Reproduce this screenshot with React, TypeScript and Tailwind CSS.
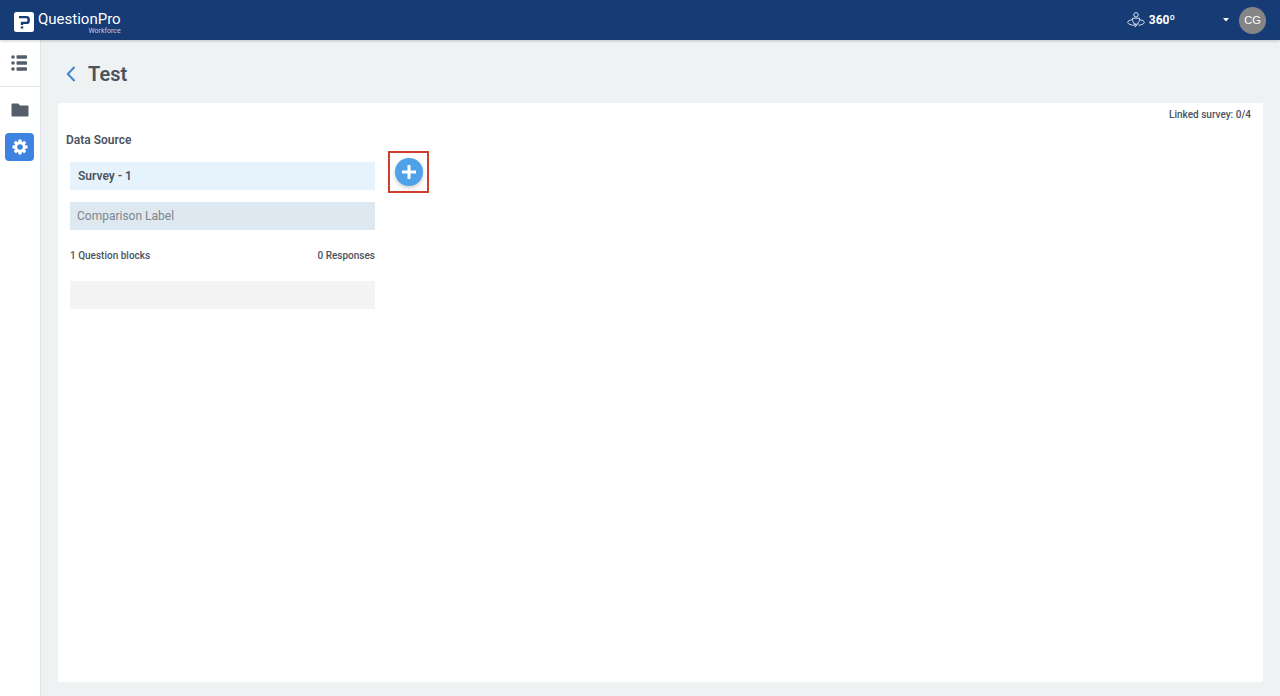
import type { ReactNode } from 'react';

interface SidebarButtonProps {
  label: string;
  active?: boolean;
  children: ReactNode;
}

function SidebarButton({ label, active = false, children }: SidebarButtonProps) {
  return (
    <button
      type="button"
      aria-label={label}
      className={
        active
          ? 'flex h-7 w-[29px] items-center justify-center rounded bg-[#3d83df] text-white'
          : 'flex h-7 w-[29px] items-center justify-center rounded text-[#545e6b]'
      }
    >
      {children}
    </button>
  );
}

function ListIcon() {
  return (
    <svg width="16" height="16" viewBox="0 0 16 16" fill="currentColor" aria-hidden="true">
      <circle cx="2" cy="2" r="1.8" />
      <circle cx="2" cy="8" r="1.8" />
      <circle cx="2" cy="14" r="1.8" />
      <rect x="5.5" y="0.2" width="10.5" height="3.6" rx="0.8" />
      <rect x="5.5" y="6.2" width="10.5" height="3.6" rx="0.8" />
      <rect x="5.5" y="12.2" width="10.5" height="3.6" rx="0.8" />
    </svg>
  );
}

function FolderIcon() {
  return (
    <svg width="18" height="14" viewBox="0 0 18 14" fill="currentColor" aria-hidden="true">
      <path d="M1.2 0.5h6L9 2.5h7.8c.5 0 .7.3.7.7v9.6c0 .4-.3.7-.7.7H1.2c-.4 0-.7-.3-.7-.7V1.2c0-.4.3-.7.7-.7z" />
    </svg>
  );
}

function GearIcon() {
  return (
    <svg width="16" height="16" viewBox="0 0 16 16" aria-hidden="true">
      <g fill="currentColor">
        <rect x="6.3" y="0.5" width="3.4" height="15" rx="1" />
        <rect x="6.3" y="0.5" width="3.4" height="15" rx="1" transform="rotate(45 8 8)" />
        <rect x="6.3" y="0.5" width="3.4" height="15" rx="1" transform="rotate(90 8 8)" />
        <rect x="6.3" y="0.5" width="3.4" height="15" rx="1" transform="rotate(135 8 8)" />
        <circle cx="8" cy="8" r="5.5" />
      </g>
      <circle cx="8" cy="8" r="2.8" fill="#3d83df" />
    </svg>
  );
}

function Person360Icon() {
  return (
    <svg width="18" height="16" viewBox="0 0 18 16" fill="none" stroke="#d5e0f0" aria-hidden="true">
      <circle cx="9" cy="2.8" r="2.2" />
      <path d="M5.6 6.2h6.8v2.4c0 1.2-.7 1.7-1.4 2v1.6H7v-1.6c-.7-.3-1.4-.8-1.4-2z" strokeLinejoin="round" />
      <path d="M5.2 7.7C2.6 8.1.7 9 .7 10.3c0 1.7 3.4 3 7.8 3.1M12.8 7.7c2.6.4 4.5 1.3 4.5 2.6 0 1.5-2.4 2.6-5.7 3" />
      <path d="M7.7 11.5l2 1.9-2 1.9" />
    </svg>
  );
}

function Header() {
  return (
    <header className="relative z-10 flex h-10 items-center justify-between bg-[#163b75] px-[14px] text-white shadow-[0_1px_3px_#0003]">
      <a href="#" className="flex items-center gap-1 pt-1">
        <svg width="20" height="20" viewBox="0 0 20 20" aria-hidden="true">
          <rect width="20" height="20" rx="2.5" fill="#fff" />
          <path d="M5 5.1h7.4c1.5 0 2.2.7 2.2 2v1.8c0 1.3-.7 2-2.2 2H8v2" fill="none" stroke="#163b75" strokeWidth="2.4" />
          <rect x="6.8" y="14.4" width="2.4" height="2.2" fill="#163b75" />
        </svg>
        <span className="flex flex-col items-end pt-px">
          <span className="text-[15px] leading-[18px]">QuestionPro</span>
          <span className="text-[7px] leading-[7px] text-[#c3d0e6]">Workforce</span>
        </span>
      </a>
      <div className="flex items-center">
        <button type="button" className="flex items-center gap-1">
          <Person360Icon />
          <span className="text-[12px] leading-4 font-bold">360º</span>
          <svg className="ml-11" width="6" height="4" viewBox="0 0 6 4" fill="#fff" aria-hidden="true">
            <path d="M0 0h6L3 3.6z" />
          </svg>
        </button>
        <button type="button" className="ml-[10px] size-[27px] rounded-full bg-[#858585] font-['Liberation_Sans',sans-serif] text-[11px]">
          CG
        </button>
      </div>
    </header>
  );
}

function Sidebar() {
  return (
    <nav className="w-[41px] shrink-0 border-r border-[#dfe3e6] bg-white">
      <div className="flex h-[47px] items-center border-b border-[#e0e3e6] pl-1">
        <SidebarButton label="List">
          <ListIcon />
        </SidebarButton>
      </div>
      <div className="flex flex-col gap-[9px] pt-[9px] pl-[5px]">
        <SidebarButton label="Folders">
          <FolderIcon />
        </SidebarButton>
        <SidebarButton label="Settings" active>
          <GearIcon />
        </SidebarButton>
      </div>
    </nav>
  );
}

function DataSource() {
  return (
    <section className="flex gap-[13px] pl-3">
      <div className="w-[305px] pt-[11px]">
        <div className="flex h-7 items-center bg-[#e7f3fc] px-2 text-[12px] font-semibold">Survey - 1</div>
        <input
          type="text"
          aria-label="Comparison Label"
          placeholder="Comparison Label"
          className="mt-3 block h-7 w-full bg-[#dde8f1] px-[7px] text-[12px] outline-none placeholder:text-[#7d858d]"
        />
        <div className="mt-[18px] flex justify-between text-[10px] leading-4 font-medium">
          <span>1 Question blocks</span>
          <span>0 Responses</span>
        </div>
        <div className="mt-[17px] h-7 bg-[#f4f4f4]" />
      </div>
      <div className="flex h-[42px] w-[41px] items-center justify-center border-2 border-[#cf3f2e]">
        <button
          type="button"
          aria-label="Add survey"
          className="flex size-7 items-center justify-center rounded-full bg-[#4fa1e8] shadow-[0_2px_4px_#0003]"
        >
          <svg width="14" height="14" viewBox="0 0 14 14" stroke="#fff" strokeWidth="3" aria-hidden="true">
            <path d="M7 0v14M0 7h14" />
          </svg>
        </button>
      </div>
    </section>
  );
}

export default function App() {
  return (
    <div className="flex min-h-screen flex-col bg-[#eef2f3] font-[Roboto,sans-serif] text-[#4b535e]">
      <Header />
      <div className="flex flex-1">
        <Sidebar />
        <main className="flex flex-1 flex-col px-[17px] pb-[14px]">
          <div className="flex h-[63px] items-center gap-3 pl-2">
            <a href="#" aria-label="Back" className="pt-1">
              <svg width="10" height="16" viewBox="0 0 10 16" fill="none" stroke="#4285d3" strokeWidth="2" aria-hidden="true">
                <path d="M8.5 1L1.8 8l6.7 7" />
              </svg>
            </a>
            <h1 className="pt-1 text-[20px] leading-7 font-semibold">Test</h1>
          </div>
          <div className="flex-1 bg-white">
            <p className="pt-1 pr-3 text-right text-[10px] leading-4 font-medium">Linked survey: 0/4</p>
            <h2 className="mt-[9px] mb-[3px] pl-2 text-[12px] leading-4 font-semibold">Data Source</h2>
            <DataSource />
          </div>
        </main>
      </div>
    </div>
  );
}
